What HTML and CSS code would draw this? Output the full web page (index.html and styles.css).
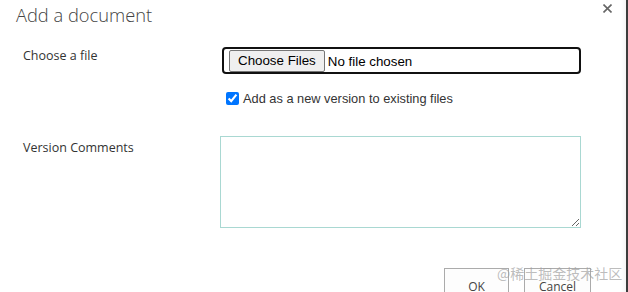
FILE: index.html
```html
<!DOCTYPE html>
<html lang="en">
<head>
    <meta charset="UTF-8">
    <title>Add a document</title>
    <link rel="stylesheet" href="styles.css">
</head>
<body>
    <div class="dialog">
        <div class="dialog-header">
            <h1>Add a document</h1>
            <svg class="close-btn" width="9" height="9" viewBox="0 0 9 9">
                <path d="M0.5 0.5 L8.5 8.5 M8.5 0.5 L0.5 8.5" stroke="#666" stroke-width="1.6" fill="none"/>
            </svg>
        </div>

        <div class="form">
            <label class="form-label">Choose a file</label>
            <div class="form-control file-control">
                <div class="file-box">
                    <input type="file" multiple>
                </div>
                <label class="check-row">
                    <input type="checkbox" checked>
                    <span>Add as a new version to existing files</span>
                </label>
            </div>

            <label class="form-label comments-label">Version Comments</label>
            <div class="form-control">
                <textarea class="comments"></textarea>
            </div>
        </div>

        <div class="dialog-buttons">
            <button class="dlg-button ok">OK</button>
            <button class="dlg-button">Cancel</button>
        </div>

        <div class="watermark">@稀土掘金技术社区</div>
    </div>
</body>
</html>
```

FILE: styles.css
```css
* {
    margin: 0;
    padding: 0;
    box-sizing: border-box;
}
body {
    background: #fff;
    font-family: 'Open Sans', sans-serif;
    color: #333;
    overflow: hidden;
}
.dialog {
    position: relative;
    width: 628px;
    height: 292px;
    border-right: 2px solid #3c3c3c;
    box-shadow: inset -5px 0 4px -3px rgba(0, 0, 0, 0.05);
    overflow: hidden;
}
.dialog-header {
    display: flex;
    justify-content: space-between;
    align-items: flex-start;
    padding: 0 14px 0 16px;
    height: 40px;
}
.dialog-header h1 {
    font-size: 18.3px;
    font-weight: 300;
    color: #444;
    line-height: 28px;
    margin-top: 1px;
}
.close-btn {
    display: block;
    margin-top: 4px;
}
.form {
    display: grid;
    grid-template-columns: 197px 1fr;
    padding-left: 23px;
    padding-right: 47px;
}
.form-label {
    font-size: 12.5px;
    color: #333;
    line-height: 17px;
    padding-top: 7px;
}
.file-control {
    padding-top: 7px;
}
.comments-label {
    padding-top: 33px;
}
.file-box {
    margin-left: 2px;
    height: 27px;
    border: 2px solid #111;
    border-radius: 4px;
    padding: 1px 5px;
    display: flex;
    align-items: center;
}
.file-box input {
    font-family: 'Liberation Sans', Arial, sans-serif;
    font-size: 13.33px;
    color: #000;
}
.file-box input::file-selector-button {
    font-family: 'Liberation Sans', Arial, sans-serif;
    font-size: 13.33px;
    height: 22px;
    padding: 0 8px;
    margin-right: 3px;
    background: #efefef;
    border: 1px solid #767676;
    border-radius: 2px;
    color: #000;
}
.check-row {
    display: flex;
    align-items: center;
    gap: 4px;
    margin: 17px 0 0 6px;
    font-family: 'Liberation Sans', Arial, sans-serif;
    font-size: 12.8px;
    color: #333;
}
.check-row input {
    width: 13px;
    height: 13px;
    margin: 0;
    accent-color: #0075ff;
}
.comments {
    margin-top: 30px;
    display: block;
    width: 361px;
    height: 92px;
    border: 1px solid #a9d8d2;
    resize: both;
    outline: none;
}
.dialog-buttons {
    display: flex;
    justify-content: flex-end;
    gap: 15px;
    padding-right: 35px;
    margin-top: 40px;
}
.dlg-button {
    width: 67px;
    height: 30px;
    background: #fdfdfd;
    border: 1px solid #ababab;
    font-family: 'Open Sans', sans-serif;
    font-size: 12px;
    color: #444;
    padding-top: 6px;
}
.dlg-button.ok {
    width: 65px;
}
.watermark {
    position: absolute;
    left: 497px;
    top: 263px;
    font-family: 'Noto Sans CJK SC', sans-serif;
    font-size: 14px;
    color: rgba(160, 160, 160, 0.7);
    pointer-events: none;
}
```
